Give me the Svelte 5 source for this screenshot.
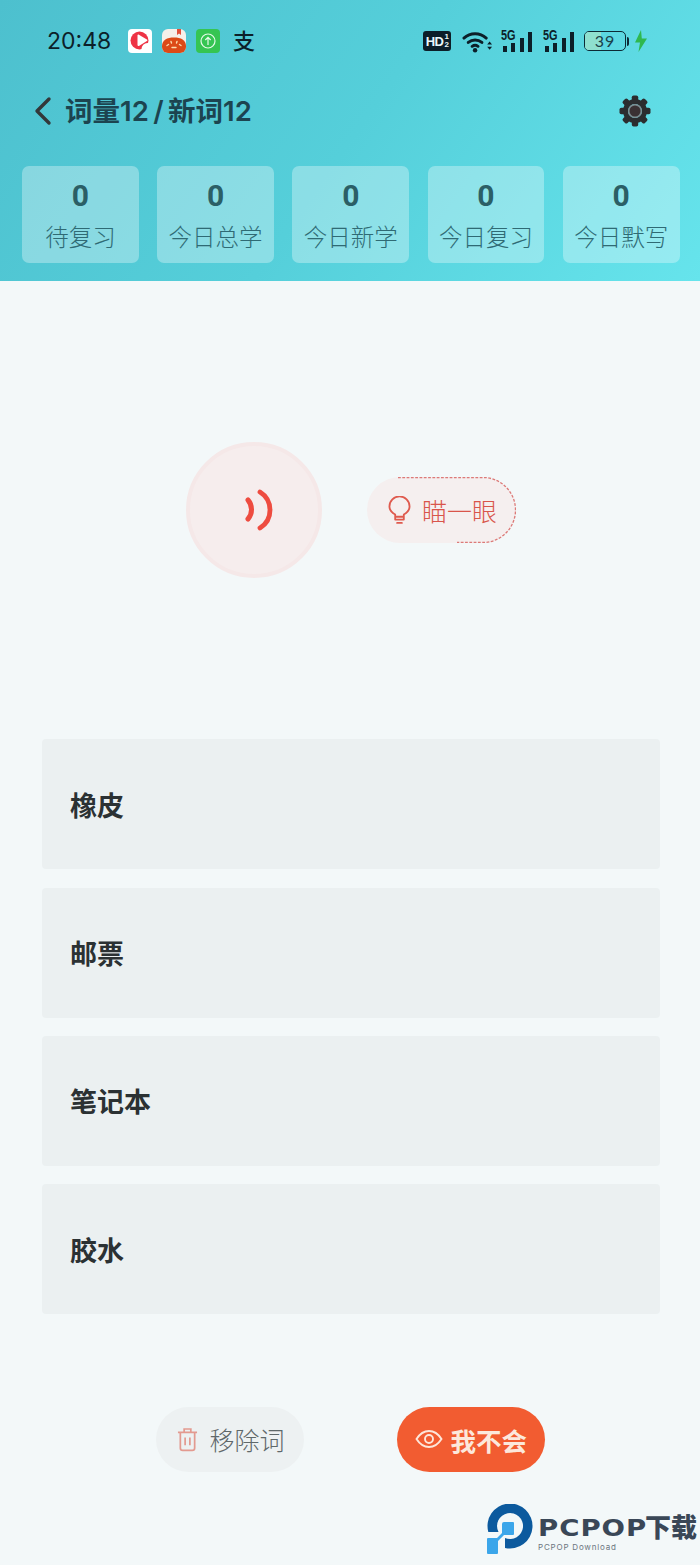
<script>
  const stats = ['待复习', '今日总学', '今日新学', '今日复习', '今日默写'];
  const options = ['橡皮', '邮票', '笔记本', '胶水'];
  const teeth = [0, 45, 90, 135, 180, 225, 270, 315];
</script>

<div class="page">
  <header class="header">
    <div class="status">
      <span class="time">20:48</span>
      <div class="apps">
        <svg class="app" viewBox="0 0 24 24">
          <rect width="24" height="24" rx="4" fill="#fff" />
          <circle cx="11.500" cy="11.500" r="9" fill="#ee3345" />
          <circle cx="19.500" cy="20" r="6" fill="#fff" />
          <path d="M9.500 6.500c0-.8.700-1.200 1.400-.8l8 4.800c.6.400.6 1.200 0 1.600l-8 4.800c-.7.400-1.400 0-1.400-.8z" fill="#fff" />
        </svg>
        <svg class="app" viewBox="0 0 24 24">
          <rect width="24" height="24" rx="6" fill="#f5f0ea" />
          <path d="M0 17C0 11 5 8.500 12 8.500S24 11 24 17v1a6 6 0 0 1-6 6H6a6 6 0 0 1-6-6z" fill="#dc4a17" />
          <path d="M15 0h4v6l-2-1.500L15 6z" fill="#e2503a" />
          <path d="M5 16.500l1.500-1M9 12.500l.5 1.500M15 12.500l-.5 1.500M19 16.500l-1.500-1M10 18.500h4" stroke="#fbdcae" stroke-width="1.400" stroke-linecap="round" />
        </svg>
        <svg class="app" viewBox="0 0 24 24">
          <rect width="24" height="24" rx="4" fill="#35c552" />
          <circle cx="12" cy="12" r="7" fill="none" stroke="#e6fbe9" stroke-width="1.200" />
          <path d="M12 16V8.500M9.300 11L12 8.300 14.700 11" fill="none" stroke="#e6fbe9" stroke-width="1.200" />
        </svg>
        <span class="ali">支</span>
      </div>
      <div class="sys">
        <span class="hd">HD<span class="frac"><i>1</i><i>2</i></span></span>
        <svg class="wifi" viewBox="0 0 32 24">
          <path d="M2 9a17 17 0 0 1 23 0M6.500 13.500a11 11 0 0 1 14 0M10.500 17.500a5 5 0 0 1 6 0" fill="none" stroke="#0c1f29" stroke-width="3" stroke-linecap="round" />
          <circle cx="13.500" cy="21.500" r="2.300" fill="#0c1f29" />
          <path d="M26 15.500l2.500-3 2.500 3zM26 18l2.500 3 2.500-3z" fill="#0c1f29" />
        </svg>
        {#each [0, 1] as n (n)}
          <div class="signal">
            <span class="g5">5G</span>
            <i class="b b1"></i><i class="b b2"></i><i class="b b3"></i><i class="b b4"></i>
          </div>
        {/each}
        <div class="battery">
          <span class="level"></span>
          <span class="pct">39</span>
        </div>
        <span class="cap"></span>
        <svg class="bolt" viewBox="0 0 14 22"><path d="M7 0L1 12.500h5L4.500 22 13 8.500H7.800z" fill="#2fb84f" /></svg>
      </div>
    </div>

    <nav class="nav">
      <svg class="back" viewBox="0 0 20 30"><path d="M16 3L4 15l12 12" fill="none" stroke="#33383a" stroke-width="3.400" stroke-linecap="round" stroke-linejoin="round" /></svg>
      <h1 class="title">词量12 / 新词12</h1>
      <svg class="gear" viewBox="0 0 32 32">
        {#each teeth as deg (deg)}
          <rect x="12.800" y="0.500" width="6.400" height="8" rx="1.800" fill="#2b2d2f" transform="rotate({deg} 16 16)" />
        {/each}
        <circle cx="16" cy="16" r="9.500" fill="none" stroke="#2b2d2f" stroke-width="5" />
        <circle cx="16" cy="16" r="7" fill="#7c8a8e" />
        <circle cx="16" cy="16" r="5.500" fill="#3a3133" />
      </svg>
    </nav>

    <div class="stats">
      {#each stats as label (label)}
        <div class="stat">
          <span class="num">0</span>
          <span class="label">{label}</span>
        </div>
      {/each}
    </div>
  </header>

  <main class="main">
    <section class="prompt">
      <button class="sound" aria-label="播放">
        <svg viewBox="0 0 30 44" class="wave">
          <path d="M5 12a14.600 14.600 0 0 1 0 19" fill="none" stroke="#ee4c40" stroke-width="5" stroke-linecap="round" />
          <path d="M17 4a21.200 21.200 0 0 1 0 36" fill="none" stroke="#ee4c40" stroke-width="4.800" stroke-linecap="round" />
        </svg>
      </button>
      <button class="peek">
        <svg class="peek-dash" viewBox="0 0 149 66" aria-hidden="true">
          <path d="M31 .5H116a32.500 32.500 0 0 1 0 65H90" fill="none" stroke="#dc7a78" stroke-width="1.300" stroke-dasharray="2.800 1.500" />
        </svg>
        <svg class="bulb" viewBox="0 0 24 30">
          <path d="M7.500 21.500v-2.300C4.500 17.500 1.500 14.800 1.500 10.800a10.500 10.500 0 0 1 21 0c0 4-3 6.700-6 8.400v2.300zM7.500 21.500v3h9v-3M9.500 28h5" fill="none" stroke="#df5a4e" stroke-width="1.900" stroke-linejoin="round" stroke-linecap="round" />
        </svg>
        <span>瞄一眼</span>
      </button>
    </section>

    <section class="options">
      {#each options as word (word)}
        <div class="option">{word}</div>
      {/each}
    </section>

    <section class="actions">
      <button class="action remove">
        <svg class="trash" viewBox="0 0 22 26">
          <path d="M1 5.500h20M7.500 5V2h7v3M3.500 5.500V22a2.500 2.500 0 0 0 2.500 2.500h10a2.500 2.500 0 0 0 2.500-2.500V5.500M8.500 11v8M13.500 11v8" fill="none" stroke="#e39a90" stroke-width="1.800" />
        </svg>
        <span>移除词</span>
      </button>
      <button class="action dunno">
        <svg class="eye" viewBox="0 0 28 20">
          <path d="M1.500 10C5 4.500 9 2 14 2s9 2.500 12.500 8C23 15.500 19 18 14 18S5 15.500 1.500 10z" fill="none" stroke="#fde6da" stroke-width="1.900" />
          <circle cx="14" cy="10" r="4" fill="none" stroke="#fde6da" stroke-width="1.900" />
        </svg>
        <span>我不会</span>
      </button>
    </section>
  </main>

  <div class="mark">
    <svg class="mark-logo" viewBox="0 0 46 50">
      <path d="M1.300 28A22.500 22.500 0 1 1 18 44L18 34A13 13 0 1 0 11.500 28Z" fill="#0c5a9e" />
      <path d="M17 18H26a1 1 0 0 1 1 1V30a1 1 0 0 1-1 1H17L11 37V49a1 1 0 0 1-1 1H1a1 1 0 0 1-1-1V35a1 1 0 0 1 1-1H10L15 29V20a2 2 0 0 1 2-2Z" fill="#3ba6ea" />
    </svg>
    <div class="mark-text">
      <span class="mark-name"><span class="mark-latin"><span class="mark-wide">PCPOP</span></span>下载</span>
      <span class="mark-sub">PCPOP Download</span>
    </div>
  </div>
</div>

<style>
  :global(body) {
    margin: 0;
    background: #f3f8f9;
  }

  .page {
    position: relative;
    width: 700px;
    height: 1565px;
    overflow: hidden;
    background: #f3f8f9;
    font-family: Inter, "Noto Sans CJK SC", sans-serif;
  }

  .header {
    height: 281px;
    box-sizing: border-box;
    padding: 0 20px 18px 22px;
    background: linear-gradient(125deg, #4dc0ce 0%, #55cfda 50%, #66e4ec 100%);
  }

  .status {
    display: flex;
    align-items: center;
    height: 82px;
    padding-left: 25px;
    color: #0c1f29;
  }

  .time {
    font-size: 23px;
    font-weight: 400;
    width: 81px;
  }

  .apps {
    display: flex;
    align-items: center;
    gap: 10px;
  }

  .app {
    display: block;
    width: 24px;
    height: 24px;
  }

  .ali {
    margin-left: 3px;
    font-size: 22px;
    line-height: 24px;
    font-weight: 500;
  }

  .sys {
    display: flex;
    align-items: center;
    margin-left: auto;
    margin-right: 32px;
  }

  .hd {
    display: flex;
    align-items: center;
    justify-content: center;
    box-sizing: border-box;
    width: 28px;
    height: 20px;
    background: #0c1f29;
    border-radius: 3px;
    color: #eaf8fa;
    font: 700 13px/1 "Liberation Sans", sans-serif;
    letter-spacing: -0.500px;
  }

  .frac {
    display: flex;
    flex-direction: column;
    margin-left: 1px;
  }

  .frac i {
    font-style: normal;
    font-size: 8px;
    line-height: 8px;
  }

  .wifi {
    width: 31px;
    height: 24px;
    margin-left: 11px;
  }

  .signal {
    position: relative;
    display: flex;
    align-items: flex-end;
    gap: 4.300px;
    width: 31px;
    height: 22px;
    margin-left: 8px;
    padding-left: 2px;
    box-sizing: border-box;
  }

  .signal + .signal {
    margin-left: 11px;
  }

  .g5 {
    position: absolute;
    top: -1px;
    left: 0;
    font: 700 14px/13px "Liberation Sans", sans-serif;
    transform: scaleX(0.78);
    transform-origin: left;
  }

  .b {
    width: 4px;
    background: #0c1f29;
  }

  .b1 { height: 6px; }
  .b2 { height: 9px; }
  .b3 { height: 14px; }
  .b4 { height: 20px; }

  .battery {
    position: relative;
    box-sizing: border-box;
    width: 42px;
    height: 20px;
    margin-left: 10px;
    border: 1.500px solid #0c2a35;
    border-radius: 5px;
    overflow: hidden;
  }

  .level {
    position: absolute;
    left: 0;
    top: 0;
    bottom: 0;
    width: 39%;
    background: #8fe0cf;
  }

  .pct {
    position: absolute;
    inset: 0;
    text-align: center;
    font: 400 16px/17px Lato, sans-serif;
    letter-spacing: 1px;
    color: #1a3f4a;
  }

  .cap {
    width: 2px;
    height: 9px;
    margin-left: 1px;
    background: #0c2a35;
    border-radius: 0 2px 2px 0;
  }

  .bolt {
    width: 14px;
    height: 22px;
    margin-left: 5px;
  }

  .nav {
    display: flex;
    align-items: center;
    height: 58px;
    margin-bottom: 26px;
    padding-left: 11px;
  }

  .back {
    width: 20px;
    height: 30px;
  }

  .title {
    margin: 0 0 5px 12px;
    font-size: 27.500px;
    font-weight: 600;
    word-spacing: -2.500px;
    color: #1c4450;
  }

  .gear {
    width: 32px;
    height: 32px;
    margin-left: auto;
    margin-right: 29px;
  }

  .stats {
    display: grid;
    grid-template-columns: repeat(5, 116.800px);
    column-gap: 18.400px;
  }

  .stat {
    display: flex;
    flex-direction: column;
    align-items: center;
    height: 97px;
    box-sizing: border-box;
    padding-top: 11px;
    background: rgba(255, 255, 255, 0.32);
    border-radius: 7px;
  }

  .num {
    font-family: Roboto, sans-serif;
    font-size: 30px;
    line-height: 38px;
    font-weight: 700;
    color: #2b5f66;
  }

  .label {
    margin-top: 7px;
    font-size: 23.500px;
    line-height: 32px;
    font-weight: 300;
    color: #2f6a74;
  }

  .main {
    display: flex;
    flex-direction: column;
  }

  .prompt {
    display: flex;
    align-items: center;
    justify-content: center;
    gap: 45px;
    margin-top: 161px;
    margin-left: 2px;
  }

  button {
    border: 0;
    padding: 0;
    font-family: inherit;
    cursor: pointer;
  }

  .sound {
    display: flex;
    align-items: center;
    justify-content: center;
    box-sizing: border-box;
    width: 136px;
    height: 136px;
    padding-left: 8px;
    background: #f6eded;
    border: 4px solid #f5e8e8;
    border-radius: 50%;
  }

  .wave {
    width: 30px;
    height: 44px;
  }

  .peek {
    position: relative;
    display: flex;
    align-items: center;
    box-sizing: border-box;
    width: 149px;
    height: 66px;
    padding-left: 21px;
    background: #f5efef;
    border-radius: 33px;
    color: #d9554b;
    font-size: 25px;
    font-weight: 300;
  }

  .peek-dash {
    position: absolute;
    inset: 0;
    width: 149px;
    height: 66px;
  }

  .bulb {
    width: 23px;
    height: 29px;
    margin-right: 11px;
  }

  .options {
    display: flex;
    flex-direction: column;
    gap: 18.330px;
    margin: 161.200px 40px 0 42px;
  }

  .option {
    display: flex;
    align-items: center;
    box-sizing: border-box;
    height: 130px;
    padding-left: 28px;
    background: #ebf0f1;
    border-radius: 4px;
    font-size: 27px;
    font-weight: 700;
    color: #2b3133;
  }

  .actions {
    display: flex;
    justify-content: center;
    gap: 93px;
    margin-top: 92.800px;
  }

  .action {
    display: flex;
    align-items: center;
    box-sizing: border-box;
    width: 148px;
    height: 65px;
    border-radius: 33px;
    font-size: 25px;
  }

  .remove {
    padding-left: 21px;
    background: #edf1f2;
    color: #5f686a;
    font-weight: 300;
  }

  .trash {
    width: 21px;
    height: 25px;
    margin-right: 12px;
  }

  .dunno {
    padding-left: 18px;
    background: #f25c31;
    color: #fce8dc;
    font-size: 25.500px;
    font-weight: 700;
  }

  .eye {
    width: 28px;
    height: 20px;
    margin-right: 8px;
  }

  .mark {
    position: absolute;
    left: 487px;
    top: 1504px;
    display: flex;
    align-items: flex-start;
  }

  .mark-logo {
    width: 46px;
    height: 50px;
  }

  .mark-text {
    display: flex;
    flex-direction: column;
    margin-left: 5px;
    margin-top: 10px;
  }

  .mark-name {
    display: flex;
    font-size: 26px;
    line-height: 28px;
    font-weight: 800;
    color: #3a4757;
    white-space: nowrap;
  }

  .mark-latin {
    display: block;
    width: 107px;
  }

  .mark-wide {
    display: block;
    font-family: "DejaVu Sans", sans-serif;
    font-size: 23px;
    font-weight: 700;
    letter-spacing: 0.800px;
    transform: scaleX(1.2);
    transform-origin: left;
  }

  .mark-sub {
    font-size: 8px;
    line-height: 10px;
    letter-spacing: 0.800px;
    color: #6c7580;
    white-space: nowrap;
  }
</style>
